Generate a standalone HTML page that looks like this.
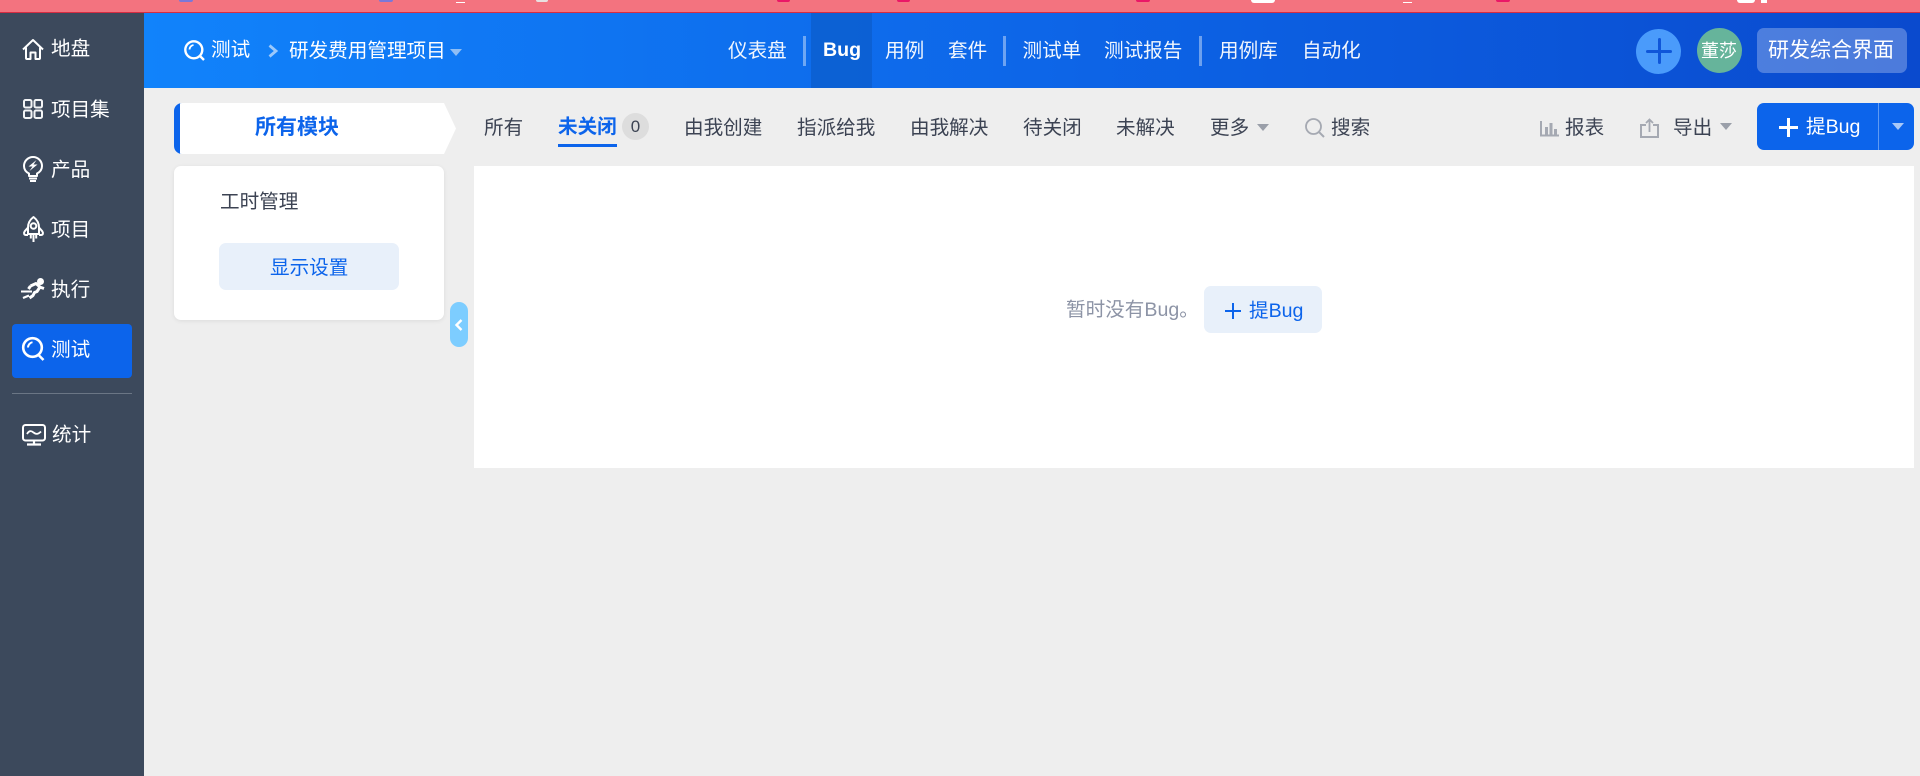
<!DOCTYPE html>
<html lang="zh">
<head>
<meta charset="utf-8">
<title>测试</title>
<style>
html,body{margin:0;padding:0;width:1920px;height:776px;overflow:hidden;background:#eee}
body{position:relative;font-family:"Liberation Sans","Noto Sans CJK SC",sans-serif;font-size:19.6px;color:#3c4353}
.a{position:absolute}
.t{position:absolute;white-space:nowrap;line-height:28px;height:28px}
.w{color:#fff}
.g{color:#3c4353}
.b{color:#0c64eb}
.nav{color:#fff;opacity:.95}
.sep{position:absolute;width:3px;top:36px;height:30px;background:rgba(255,255,255,.4)}
.car{position:absolute;width:0;height:0;border-left:6px solid transparent;border-right:6px solid transparent;border-top:7px solid #9a9fa9}
.dot{position:absolute;top:0;height:2px;border-radius:0 0 8px 8px}
svg{position:absolute;overflow:visible;fill:none}
</style>
</head>
<body>
<!-- top strip -->
<div class="a" style="left:0;top:0;width:1920px;height:12px;background:#f3737f"></div>
<div class="a" style="left:0;top:12px;width:1920px;height:1px;background:#d62c42"></div>
<div class="dot" style="left:179px;width:14px;background:#7a78d8"></div>
<div class="dot" style="left:379px;width:14px;background:#7a78d8"></div>
<div class="a" style="left:456px;top:2px;width:9px;height:1px;background:#fff"></div>
<div class="dot" style="left:536px;width:12px;background:#e8e0e0"></div>
<div class="dot" style="left:777px;width:13px;background:#ea1767"></div>
<div class="dot" style="left:897px;width:13px;background:#ea1767"></div>
<div class="dot" style="left:1136px;width:14px;background:#ea1767"></div>
<div class="a" style="left:1251px;top:0;width:24px;height:3px;background:#fff;border-radius:0 0 3px 3px"></div>
<div class="a" style="left:1403px;top:2px;width:9px;height:1px;background:#fff"></div>
<div class="dot" style="left:1496px;width:14px;background:#ea1767"></div>
<div class="a" style="left:1737px;top:0;width:18px;height:3px;background:#fff;border-radius:0 0 3px 3px"></div>
<div class="a" style="left:1761px;top:0;width:6px;height:3px;background:#fff"></div>

<!-- sidebar -->
<div class="a" style="left:0;top:13px;width:144px;height:763px;background:#3c495c"></div>
<div class="a" style="left:12px;top:324px;width:120px;height:54px;background:#0c64eb;border-radius:4px"></div>
<div class="a" style="left:12px;top:393px;width:120px;height:1px;background:#6b7685"></div>

<svg style="left:22px;top:39px" width="22" height="21" viewBox="0 0 22 21"><path d="M1 10.500 11 1l10 9.500M4 8.500V19a1 1 0 0 0 1 1h3.500v-6.500h5V20H17a1 1 0 0 0 1-1V8.500" stroke="#fff" stroke-width="2" stroke-linejoin="round"/></svg>
<svg style="left:23px;top:99px" width="20" height="20" viewBox="0 0 20 20"><g stroke="#f2f4f6" stroke-width="2"><rect x="1" y="1" width="7.500" height="7.500" rx="1.500"/><rect x="11.500" y="1" width="7.500" height="7.500" rx="1.500"/><rect x="1" y="11.500" width="7.500" height="7.500" rx="1.500"/><rect x="11.500" y="11.500" width="7.500" height="7.500" rx="1.500"/></g></svg>
<svg style="left:23px;top:156px" width="20" height="26" viewBox="0 0 20 26"><path d="M6 20v-2.500C3 16 1 13.300 1 10a9 9 0 0 1 18 0c0 3.300-2 6-5 7.500V20z" stroke="#fff" stroke-width="2" stroke-linejoin="round"/><path d="M6 22.500h8M7 25h6" stroke="#fff" stroke-width="2"/><path d="M13.500 4 5.500 10.500h4L6.500 15l8-6.500h-4z" fill="#fff"/></svg>
<svg style="left:23px;top:216px" width="21" height="27" viewBox="0 0 21 27"><path d="M10.500 1C6.500 4 5 8 5 11.500V18h11v-6.500C16 8 14.500 4 10.500 1z" stroke="#fff" stroke-width="2" stroke-linejoin="round"/><circle cx="10.500" cy="10" r="2.800" stroke="#fff" stroke-width="2"/><path d="M5 11.500 1.700 15.300C.5 17 1 19 3 19h2M16 11.500l3.300 3.800C20.500 17 20 19 18 19h-2" stroke="#fff" stroke-width="2"/><path d="M7.800 19v3.500M10.500 19v7M13.200 19v3.500" stroke="#fff" stroke-width="2"/></svg>
<svg style="left:21px;top:278px" width="25" height="21" viewBox="0 0 25 21"><circle cx="19.500" cy="3.500" r="3.500" fill="#fff"/><path d="M9.500 8 15 5.500 19 9l-3 4.500-2.500 1-1.500 3-3.500 2.500M18.500 9l4.500 1.500M9.500 8 7.500 11" stroke="#fff" stroke-width="3" stroke-linejoin="round"/><path d="M0 13.500h11" stroke="#fff" stroke-width="2"/><path d="M2 20l6-2.500" stroke="#fff" stroke-width="2.200"/></svg>
<svg style="left:22px;top:337px" width="23" height="24" viewBox="0 0 23 24"><circle cx="10.500" cy="10.500" r="9.300" stroke="#fff" stroke-width="2.600"/><path d="M6 10.500c0-2.500 2-4.900 4.500-5.300" stroke="#fff" stroke-width="2"/><path d="M16.500 18 21.500 23" stroke="#fff" stroke-width="2.600"/></svg>
<svg style="left:22px;top:424px" width="24" height="22" viewBox="0 0 24 22"><rect x="1" y="1" width="22" height="15.500" rx="2.500" stroke="#fff" stroke-width="2"/><path d="M5 10c2-3.500 4-3.500 6.500-1.500S16 10.500 19 7.500" stroke="#fff" stroke-width="1.800"/><path d="M12 16.500v3M5 20.500h14" stroke="#fff" stroke-width="2.200"/></svg>

<div class="t w" style="left:51px;top:35px">地盘</div>
<div class="t w" style="left:51px;top:96px">项目集</div>
<div class="t w" style="left:51px;top:156px">产品</div>
<div class="t w" style="left:51px;top:216px">项目</div>
<div class="t w" style="left:51px;top:276px">执行</div>
<div class="t w" style="left:51px;top:336px">测试</div>
<div class="t w" style="left:52px;top:421px">统计</div>

<!-- header -->
<div class="a" style="left:144px;top:13px;width:1776px;height:75px;background:linear-gradient(90deg,#1183fb 0%,#0d66e8 50%,#0a4ace 100%)"></div>
<div class="a" style="left:811px;top:13px;width:61px;height:75px;background:rgba(0,0,0,.1)"></div>
<svg style="left:184px;top:40px" width="21" height="21" viewBox="0 0 21 21"><circle cx="9.800" cy="9.800" r="8.500" stroke="#fff" stroke-width="2.400"/><path d="M5.500 9.500c0-2.300 1.800-4.200 4-4.500" stroke="#fff" stroke-width="1.800"/><path d="M15.500 15.500 20 20" stroke="#fff" stroke-width="2.400"/></svg>
<div class="t w" style="left:211px;top:36px">测试</div>
<svg style="left:268px;top:44px" width="10" height="14" viewBox="0 0 10 14"><path d="M1.500 1.500 8 7l-6.500 5.500" stroke="#9cc9fb" stroke-width="2.800"/></svg>
<div class="t w" style="left:289px;top:37px">研发费用管理项目</div>
<div class="car" style="left:450px;top:49px;border-top-color:#8fbef5"></div>

<div class="t nav" style="left:728px;top:37px">仪表盘</div>
<div class="sep" style="left:803px"></div>
<div class="t w" style="left:823px;top:36px;font-weight:bold">Bug</div>
<div class="t nav" style="left:885px;top:37px">用例</div>
<div class="t nav" style="left:948px;top:37px">套件</div>
<div class="sep" style="left:1003px"></div>
<div class="t nav" style="left:1022.500px;top:37px">测试单</div>
<div class="t nav" style="left:1104px;top:37px">测试报告</div>
<div class="sep" style="left:1199px"></div>
<div class="t nav" style="left:1219px;top:37px">用例库</div>
<div class="t nav" style="left:1302px;top:37px">自动化</div>

<div class="a" style="left:1636px;top:29px;width:45px;height:45px;border-radius:50%;background:#4a9bfb"></div>
<div class="a" style="left:1646px;top:50px;width:26px;height:3px;background:#0f56d9;border-radius:2px"></div>
<div class="a" style="left:1657.500px;top:38px;width:3px;height:26px;background:#0f56d9;border-radius:2px"></div>
<div class="a" style="left:1697px;top:28px;width:45px;height:45px;border-radius:50%;background:#66b49b"></div>
<div class="t" style="left:1701px;top:37px;font-size:18px;color:#fff">董莎</div>
<div class="a" style="left:1757px;top:28px;width:150px;height:45px;border-radius:7px;background:rgba(255,255,255,.27)"></div>
<div class="t w" style="left:1768px;top:37px;font-size:21px">研发综合界面</div>

<!-- module box -->
<svg style="left:174px;top:103px" width="284" height="53" viewBox="0 0 284 53"><path d="M8 0H270L282 25.500 270 51H8A8 8 0 0 1 0 43V8A8 8 0 0 1 8 0Z" fill="#fff"/><path d="M8 0H6V51H8A8 8 0 0 1 0 43V8A8 8 0 0 1 8 0Z" fill="#0c64eb"/></svg>
<div class="t b" style="left:255px;top:114px;font-size:21px;font-weight:bold">所有模块</div>

<div class="a" style="left:174px;top:166px;width:270px;height:154px;background:#fff;border-radius:7px;box-shadow:0 1px 5px rgba(0,0,0,.08)"></div>
<div class="t g" style="left:220px;top:188px">工时管理</div>
<div class="a" style="left:219px;top:243px;width:180px;height:47px;background:#e8f0fa;border-radius:7px"></div>
<div class="t b" style="left:270px;top:254px">显示设置</div>

<div class="a" style="left:450px;top:302px;width:18px;height:45px;background:#7dcdff;border-radius:9px"></div>
<svg style="left:455px;top:319px" width="8" height="12" viewBox="0 0 8 12"><path d="M6.500 1 1.500 6l5 5" stroke="#fff" stroke-width="2.400"/></svg>

<!-- main -->
<div class="a" style="left:474px;top:166px;width:1440px;height:302px;background:#fff"></div>

<!-- tabs -->
<div class="t g" style="left:484px;top:114px">所有</div>
<div class="t b" style="left:558px;top:113px;font-weight:bold">未关闭</div>
<div class="a" style="left:558px;top:144px;width:59px;height:3px;background:#0c64eb"></div>
<div class="a" style="left:622px;top:113px;width:27px;height:27px;border-radius:50%;background:#ddd;text-align:center;line-height:27px;font-size:17px">0</div>
<div class="t g" style="left:684px;top:114px">由我创建</div>
<div class="t g" style="left:797px;top:114px">指派给我</div>
<div class="t g" style="left:910px;top:114px">由我解决</div>
<div class="t g" style="left:1023px;top:114px">待关闭</div>
<div class="t g" style="left:1116px;top:114px">未解决</div>
<div class="t g" style="left:1210px;top:114px">更多</div>
<div class="car" style="left:1257px;top:124px"></div>
<svg style="left:1305px;top:118px" width="20" height="20" viewBox="0 0 20 20"><circle cx="8.500" cy="8.500" r="7.500" stroke="#a5a9b2" stroke-width="1.800"/><path d="M13.800 13.800 19 19" stroke="#a5a9b2" stroke-width="2"/></svg>
<div class="t g" style="left:1331px;top:114px">搜索</div>

<svg style="left:1540px;top:119px" width="19" height="18" viewBox="0 0 19 18"><path d="M1 2v14.500h18" stroke="#a5a9b2" stroke-width="2"/><path d="M5 8h3v8H5zM9.500 4h3v12h-3zM14 10h3v6h-3z" fill="#a5a9b2"/></svg>
<div class="t g" style="left:1565px;top:114px">报表</div>
<svg style="left:1640px;top:118px" width="19" height="20" viewBox="0 0 19 20"><path d="M6 7H1v12h17V7h-5" stroke="#a5a9b2" stroke-width="2"/><path d="M9.500 14V1.500M6 5l3.500-3.500L13 5" stroke="#a5a9b2" stroke-width="1.800"/></svg>
<div class="t g" style="left:1673px;top:114px">导出</div>
<div class="car" style="left:1720px;top:123px"></div>

<div class="a" style="left:1757px;top:103px;width:157px;height:47px;background:#0c64eb;border-radius:7px"></div>
<div class="a" style="left:1878px;top:103px;width:1px;height:47px;background:rgba(255,255,255,.35)"></div>
<div class="a" style="left:1779px;top:126px;width:19px;height:3px;background:#fff"></div>
<div class="a" style="left:1787px;top:118px;width:3px;height:19px;background:#fff"></div>
<div class="t w" style="left:1806px;top:113px">提Bug</div>
<div class="car" style="left:1892px;top:123px;border-top-color:#a9c8f7"></div>

<!-- empty -->
<div class="t" style="left:1066px;top:296px;color:#8d94a6">暂时没有Bug。</div>
<div class="a" style="left:1204px;top:286px;width:118px;height:47px;background:#e8f0fa;border-radius:7px"></div>
<div class="a" style="left:1225px;top:310px;width:16px;height:2px;background:#0c64eb"></div>
<div class="a" style="left:1232px;top:303px;width:2px;height:16px;background:#0c64eb"></div>
<div class="t b" style="left:1249px;top:297px">提Bug</div>
</body>
</html>
